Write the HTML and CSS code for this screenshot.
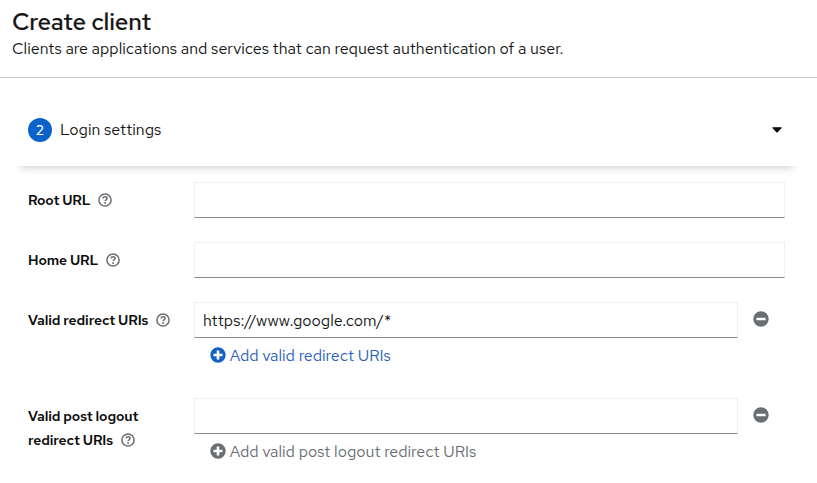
FILE: index.html
```html
<!DOCTYPE html>
<html lang="en">
<head>
<meta charset="utf-8">
<title>Create client</title>
<link rel="stylesheet" href="styles.css">
</head>
<body>
<svg class="defs" width="0" height="0" aria-hidden="true">
<symbol id="help" viewBox="0 0 14 14"><circle cx="7" cy="7" r="6.1" fill="none" stroke="currentColor" stroke-width="1.5"/><path d="M5 5.500C5.200 3.300 9 3.300 9 5.500C9 6.800 7.100 6.800 7.100 8.100" fill="none" stroke="currentColor" stroke-width="1.500"/><circle cx="7.100" cy="10" r=".95" fill="currentColor"/></symbol>
<symbol id="minus" viewBox="0 0 16 16"><path fill="currentColor" fill-rule="evenodd" d="M8 .3a7.700 7.700 0 1 0 0 15.400A7.700 7.700 0 0 0 8 .3ZM3.800 6.700h8.400q.4 0 .4.400v1.800q0 .4-.4.400H3.800q-.4 0-.4-.400V7.100q0-.4.400-.4Z"/></symbol>
<symbol id="plus" viewBox="0 0 16 16"><path fill="currentColor" fill-rule="evenodd" d="M8 .3a7.700 7.700 0 1 0 0 15.400A7.700 7.700 0 0 0 8 .3ZM6.700 3.500h2.600v3.200h3.200v2.600H9.300v3.200H6.700V9.300H3.500V6.700h3.200Z"/></symbol>
</svg>
<header class="header"><h1>Create client</h1><p>Clients are applications and services that can request authentication of a user.</p></header>
<div class="step"><span class="num">2</span><span>Login settings</span><svg class="caret" width="10" height="6" viewBox="0 0 10 6"><path d="M.8.2h8.400q.8.200.4.900L5.600 5.200q-.6.600-1.200 0L.4 1.100Q0 .4.8.2Z"/></svg></div>
<main class="form">
<div class="row"><div class="label">Root URL<svg class="help"><use href="#help"/></svg></div><input class="input"></div>
<div class="row"><div class="label">Home URL<svg class="help"><use href="#help"/></svg></div><input class="input"></div>
<div class="row tall"><div class="label">Valid redirect URIs<svg class="help"><use href="#help"/></svg></div><div class="field"><div class="line"><input class="input" value="https://www.google.com/*"><svg class="minus"><use href="#minus"/></svg></div><div class="add"><svg class="plus"><use href="#plus"/></svg><span>Add valid redirect URIs</span></div></div></div>
<div class="row tall"><div class="label">Valid post logout<br>redirect URIs<svg class="help"><use href="#help"/></svg></div><div class="field"><div class="line"><input class="input"><svg class="minus"><use href="#minus"/></svg></div><div class="add off"><svg class="plus"><use href="#plus"/></svg><span>Add valid post logout redirect URIs</span></div></div></div>
</main>
</body>
</html>
```
FILE: styles.css
```css
* { box-sizing: border-box; }
body { margin: 0; background: #fff; color: #151515; font: 16px/24px "Red Hat Text", Inter, sans-serif; overflow: hidden; height: 483px; }
.defs { display: none; }
.header { height: 78px; padding: 6px 12px 0; border-bottom: 1px solid #c8c8c8; }
h1 { margin: 0; font: 500 24px/31px "Red Hat Text", Inter, sans-serif; letter-spacing: -.12px; -webkit-text-stroke: .2px #151515; }
p { margin: 0; }
.step { height: 74px; margin: 14px 18px 0 14px; padding: 2px 17px 0 14px; display: flex; align-items: center; box-shadow: 0 8px 8px -6px rgba(3,3,3,.18); }
.num { width: 24px; height: 24px; border-radius: 50%; background: #0b62c9; color: #fff; text-align: center; font-size: 14px; font-weight: 500; margin-right: 8px; }
.caret { margin-left: auto; }
.form { padding: 16px 32px 0 28px; }
.row { display: flex; height: 60px; }
.row.tall { height: 96px; }
.label { width: 166px; flex: none; padding-top: 6px; font-size: 14px; font-weight: 600; letter-spacing: -.12px; color: #0c0c0c; white-space: nowrap; }
.help { width: 14px; height: 14px; margin-left: 8px; color: #6a6e73; vertical-align: -2px; }
.input { width: 100%; height: 36px; padding: 0 8px; border: 1px solid #f0f0f0; border-bottom-color: #8a8d90; font: inherit; color: #151515; border-radius: 0; outline: 0; background: #fff; }
.field { flex: 1; }
.line { display: flex; width: 575px; align-items: center; }
.line .input { width: 544px; }
.minus { width: 16px; height: 16px; margin: 0 0 2px 15px; color: #6a6e73; }
.add { display: flex; align-items: center; height: 24px; margin-top: 6px; padding-left: 16px; color: #2b62b8; }
.plus { width: 16px; height: 16px; margin: 0 3.800px 2px 0; color: #1462c2; }
.off, .off .plus { color: #6a6e73; }
```
